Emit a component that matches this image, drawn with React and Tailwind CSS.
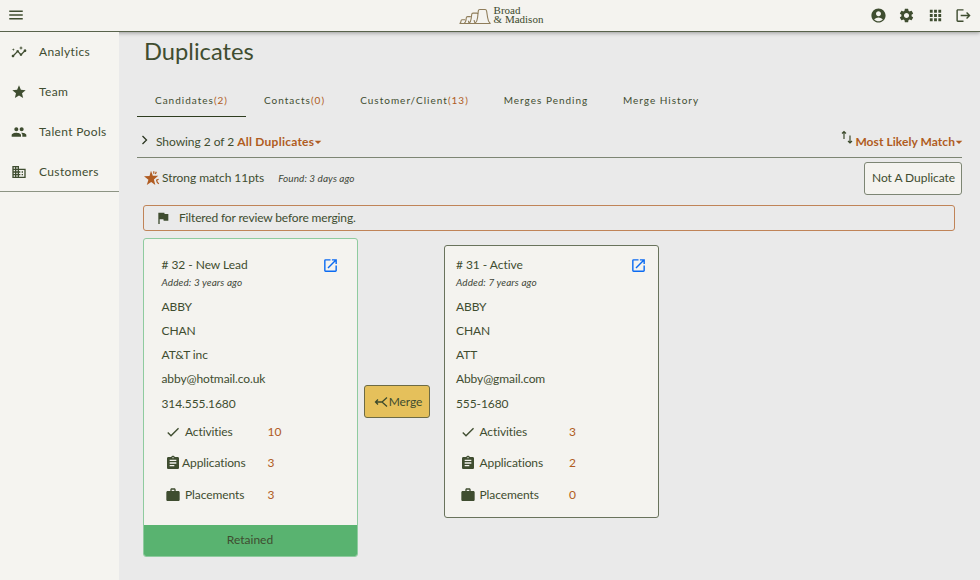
import {
  MdAccountCircle,
  MdApps,
  MdArrowDropDown,
  MdAssignment,
  MdBusiness,
  MdCheck,
  MdFlag,
  MdGroup,
  MdInsights,
  MdLogout,
  MdMenu,
  MdOpenInNew,
  MdSettings,
  MdStar,
  MdWork,
} from "react-icons/md";

const navItems = [
  { label: "Analytics", icon: MdInsights },
  { label: "Team", icon: MdStar },
  { label: "Talent Pools", icon: MdGroup },
  { label: "Customers", icon: MdBusiness },
];

const tabs = [
  { label: "Candidates", count: 2, width: "w-[109px]", active: true },
  { label: "Contacts", count: 0, width: "w-[97px]" },
  { label: "Customer/Client", count: 13, width: "w-[143px]" },
  { label: "Merges Pending", width: "w-[120px]" },
  { label: "Merge History", width: "w-[110px]" },
];

const retained = {
  title: "# 32 - New Lead",
  added: "Added: 3 years ago",
  fields: ["ABBY", "CHAN", "AT&T inc", "abby@hotmail.co.uk", "314.555.1680"],
  stats: [
    { label: "Activities", icon: MdCheck, value: 10, spacing: "ml-1 w-[82.500px]" },
    { label: "Applications", icon: MdAssignment, value: 3, spacing: "ml-px w-[85.500px]" },
    { label: "Placements", icon: MdWork, value: 3, spacing: "ml-1 w-[82.500px]" },
  ],
};

const duplicate = {
  title: "# 31 - Active",
  added: "Added: 7 years ago",
  fields: ["ABBY", "CHAN", "ATT", "Abby@gmail.com", "555-1680"],
  stats: [
    { label: "Activities", icon: MdCheck, value: 3, spacing: "ml-1 w-[89.500px]" },
    { label: "Applications", icon: MdAssignment, value: 2, spacing: "ml-1 w-[89.500px]" },
    { label: "Placements", icon: MdWork, value: 0, spacing: "ml-1 w-[89.500px]" },
  ],
};

function Logo() {
  return (
    <div className="flex items-center gap-[3px] pl-[22px]">
      <svg width="32" height="17" viewBox="0 0 32 17" fill="none" stroke="#8f7d5a" strokeWidth="1.1" strokeLinejoin="round" className="mt-0.5">
        <path d="M.6 15.500h30.600c-1.800-1.500-2.200-3-2.600-6l-1-6.500c-.2-1.100-.6-1.500-1.500-1.500h-5.300c-.9 0-1.400.4-1.500 1.400l-.7 6.600c-.3 3-.8 4.500-2.600 6" />
        <path d="M10 15.500c1.600-1.300 1.900-2.800 2.200-5l.5-4c.1-1 .5-1.400 1.300-1.400h3.700c.6 0 1 .3 1.100.9" />
        <path d="M5.200 15.500c1.300-1 1.600-2 1.800-3.300l.3-2.400c.1-.9.5-1.200 1.200-1.200h3.300M16.500 15.500c-1-1-1.300-2-1.400-3.500" />
        <path d="M.8 15.500c.9-.6 1.100-1.300 1.200-2.400.1-.9.400-1.300 1-1.300h3.300M10.500 15.500c-.7-.7-1-1.600-1.100-2.800" />
      </svg>
      <div className="font-['Liberation_Serif',serif] text-[11px] leading-[9.500px] text-[#3c4a2c]">
        Broad
        <br />
        &amp; Madison
      </div>
    </div>
  );
}

function MatchStar() {
  return (
    <svg width="16" height="16" viewBox="0 0 16 16" fill="#b05c22">
      <path d="M7 .8 8.800 5.700l5.400.1-1.700 1.500-2.600 2.200L11.300 15 7.200 12l-4.400 3 1.600-5.200L0 6.300l5.500-.2z" />
      <path d="M9.800 1.200v2.500M12.300 1.800l-.9 2.200M14.600 9.200l-2 .9.600 2 1.600 1.700" fill="none" stroke="#b05c22" strokeWidth="1.200" />
    </svg>
  );
}

function RecordCard({ record, header, className }) {
  return (
    <div className={className}>
      <div className={header}>
        <div className="flex-1">
          <div className="h-5 leading-5 tracking-[-0.05px]">{record.title}</div>
          <div className="h-4 text-[10px] leading-[15px] tracking-[0.1px] text-[#42483a] italic">{record.added}</div>
        </div>
        <MdOpenInNew className="mt-[2px] size-[17px] text-[#0b6bf2]" />
      </div>
      <div className="mt-[3.500px]">
        {record.fields.map((field) => (
          <div key={field} className="h-[24.300px] leading-[24.300px] tracking-[-0.1px]">
            {field}
          </div>
        ))}
      </div>
      <div className="pl-[3.500px]">
        {record.stats.map((stat) => (
          <div key={stat.label} className="flex h-[31.500px] items-center">
            <stat.icon className="size-4" />
            <span className={`tracking-[-0.1px] ${stat.spacing}`}>{stat.label}</span>
            <span className="text-[12px] text-[#b05c22]">{stat.value}</span>
          </div>
        ))}
      </div>
    </div>
  );
}

export default function App() {
  return (
    <div className="flex h-[580px] w-[980px] flex-col overflow-hidden bg-[#eaeaea] font-[Lato,sans-serif] text-[12px] text-[#3f4d30]">
      <header className="relative z-10 grid h-8 grid-cols-[1fr_auto_1fr] items-center border-b border-[#59634c] bg-[#f4f3ef] pb-px shadow-[0_1px_4px_rgba(0,0,0,0.35)]">
        <MdMenu className="ml-[7px] size-[18px]" />
        <Logo />
        <div className="flex justify-end gap-[11.500px] pr-2">
          <MdAccountCircle className="size-[17px]" />
          <MdSettings className="size-[17px]" />
          <MdApps className="size-[17px]" />
          <MdLogout className="size-[17px]" />
        </div>
      </header>

      <div className="flex flex-1">
        <aside className="relative z-20 w-[119px] shrink-0 bg-[#f5f4f0]">
          <nav className="h-40 border-b border-[#8d9484]">
            {navItems.map((item) => (
              <div key={item.label} className="flex h-10 items-center pl-[11px]">
                <item.icon className="size-4" />
                <span className="ml-3 tracking-[0.36px]">{item.label}</span>
              </div>
            ))}
          </nav>
        </aside>

        <main className="flex-1 pl-[18px]">
          <h1 className="h-10 pl-[7px] text-[23.700px] leading-[39px]">Duplicates</h1>

          <div className="mt-3 flex h-[33px] text-[10px] tracking-[1px]">
            {tabs.map((tab) => (
              <div
                key={tab.label}
                className={`flex shrink-0 items-center justify-center whitespace-nowrap ${tab.width} ${tab.active ? "border-b border-[#2f3d20] pt-px" : ""}`}
              >
                {tab.label}
                {tab.count !== undefined && <span className="text-[#b05c22]">({tab.count})</span>}
              </div>
            ))}
          </div>

          <div className="mr-[18px] flex h-[41px] items-center border-b border-[#7d8674] pt-[9px]">
            <svg width="8" height="10" viewBox="0 0 8 10" className="mb-[3px] ml-1" fill="none" stroke="#2b3520" strokeWidth="1.300">
              <path d="m1.500 1 4 4-4 4" />
            </svg>
            <span className="ml-[7px] tracking-[-0.05px]">Showing 2 of 2</span>
            <span className="ml-[3px] font-bold tracking-[0.24px] text-[#b05c22]">All Duplicates</span>
            <MdArrowDropDown className="-ml-1 size-4 text-[#b05c22]" />
            <div className="ml-auto flex items-center">
              <svg width="12" height="15" viewBox="0 0 12 15" className="mb-[9px]" fill="none" stroke="#3c4a2c" strokeWidth="1.200">
                <path d="M3 9V1.500M1 3.500l2-2 2 2M9 5.500v7.500M7 11l2 2 2-2" />
              </svg>
              <span className="ml-0.5 font-bold tracking-[0.06px] text-[#b05c22]">Most Likely Match</span>
              <MdArrowDropDown className="-mr-[5px] -ml-1 size-4 text-[#b05c22]" />
            </div>
          </div>

          <div className="mr-[18px] flex h-10 items-center pl-[7px]">
            <MatchStar />
            <span className="ml-0.5 tracking-[-0.05px]">Strong match 11pts</span>
            <span className="ml-[14px] text-[10px] tracking-[0.06px] text-[#42483a] italic">Found: 3 days ago</span>
            <button className="ml-auto h-[33px] w-[98px] rounded-[3px] border border-[#7d8674] bg-[#f4f3ef] pl-px tracking-[-0.05px]">
              Not A Duplicate
            </button>
          </div>

          <div className="mt-[7px] ml-[6px] flex h-[26px] w-[812px] items-center rounded-[3px] border border-[#c08458]">
            <MdFlag className="ml-[11px] size-4" />
            <span className="ml-2 tracking-[-0.150px]">Filtered for review before merging.</span>
          </div>

          <div className="mt-[7px] ml-[6px] flex">
            <div className="flex h-[319px] w-[215px] flex-col overflow-hidden rounded-[3px] border border-[#8fcb9f] bg-[#f4f3ef]">
              <RecordCard record={retained} header="flex pr-[18px]" className="flex-1 pt-4 pl-[17.500px]" />
              <div className="flex h-[31px] items-center justify-center bg-[#59b370] pr-px pb-px">Retained</div>
            </div>
            <button className="mt-[147px] ml-[6px] flex h-[33px] w-[66px] items-center justify-center rounded-[3px] border border-[#6d6b45] bg-[#e5c05b] pl-0.5">
              <svg width="14" height="12" viewBox="0 0 14 12" fill="none" stroke="#3c4a2c" strokeWidth="1.300">
                <path d="M1.500 6H8M4 3.500 1.500 6 4 8.500M13 1.500 8 6l5 4.500" />
              </svg>
              <span className="ml-px tracking-[-0.1px]">Merge</span>
            </button>
            <div className="mt-[7px] ml-[14px] h-[273px] w-[215px] rounded-[3px] border border-[#69735c] bg-[#f4f3ef]">
              <RecordCard record={duplicate} header="flex pr-[11px]" className="pt-[9px] pl-[11px]" />
            </div>
          </div>
        </main>
      </div>
    </div>
  );
}
